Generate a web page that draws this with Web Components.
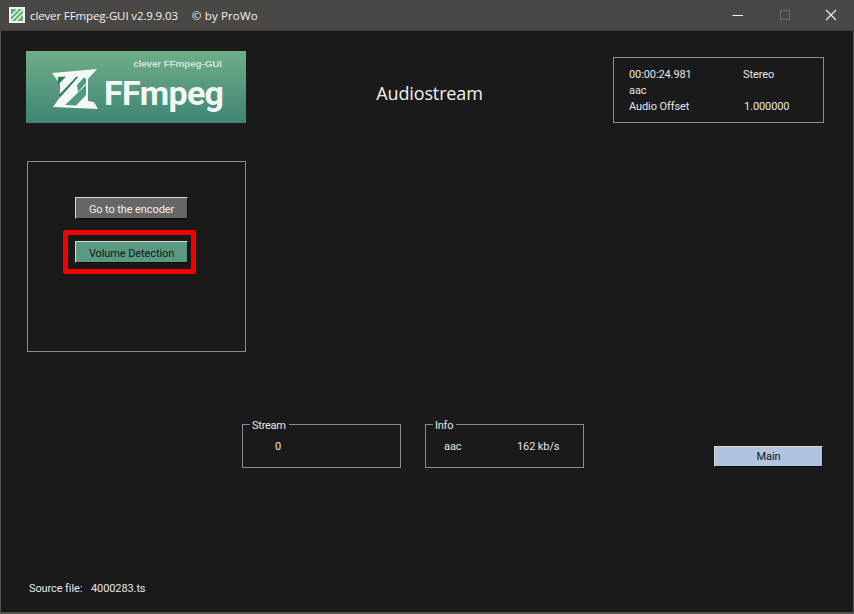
<!DOCTYPE html>
<html><head><meta charset="utf-8"><title>clever FFmpeg-GUI</title>
<style>
html,body{margin:0;padding:0;background:#1a1a1a}
body{width:854px;height:614px;overflow:hidden;font-family:"Open Sans","Noto Sans",sans-serif}
</style></head><body>
<app-window>
  <title-bar slot="title">clever FFmpeg-GUI v2.9.9.03<span style="margin-left:14px;letter-spacing:.15px">© by ProWo</span></title-bar>
  <div slot="top-left"><ff-logo></ff-logo></div>
  <span slot="heading">Audiostream</span>
  <info-box slot="top-right"></info-box>
  <action-panel slot="panel">
    <win-button tone="gray" style="margin:0 0 16px 47px">Go to the encoder</win-button>
    <red-mark><win-button tone="green">Volume Detection</win-button></red-mark>
  </action-panel>
  <group-box slot="stream" label="Stream" style="width:159px;margin-right:24px"><span style="margin-left:32px">0</span></group-box>
  <group-box slot="stream" label="Info" style="width:159px"><span style="margin-left:18px;width:73px;display:inline-block">aac</span><span>162 kb/s</span></group-box>
  <win-button slot="main" tone="blue" style="width:109px;height:21px;--lh:20px">Main</win-button>
  <span slot="source"><span style="display:inline-block;width:62px">Source file:</span>4000283.ts</span>
</app-window>
<script>
function def(name,html){
  customElements.define(name,class extends HTMLElement{
    connectedCallback(){
      if(this.shadowRoot)return;
      const r=this.attachShadow({mode:'open'});
      r.innerHTML=typeof html==='function'?html(this):html;
    }
  });
}
const font='font-family:Roboto,"Open Sans",sans-serif;font-size:11px;letter-spacing:-.1px;';
def('app-window',`<style>
:host{display:flex;flex-direction:column;width:854px;height:614px;box-sizing:border-box;border:1px solid #54524f;border-top:0;border-bottom-width:2px;background:#1a1a1a;color:#e6e6e6;${font}}
.top{display:flex;align-items:flex-start;margin:20px 0 0 25px;height:72px}
.tl{width:220px;flex:none}
.head{width:367px;flex:none;text-align:center;font:18px/24px "Open Sans",sans-serif;color:#f0f0f0;padding-top:30px;letter-spacing:-.13px}
.tr{flex:none;margin-top:6px}
.panel{margin:38px 0 0 26px}
.mid{display:flex;align-items:flex-start;margin:65px 0 0 241px;height:51px}
.main{margin:29px 0 0 130px}
.src{margin:113px 0 0 28px;line-height:16px}
</style>
<slot name="title"></slot>
<div class="top"><div class="tl"><slot name="top-left"></slot></div><div class="head"><slot name="heading"></slot></div><div class="tr"><slot name="top-right"></slot></div></div>
<div class="panel"><slot name="panel"></slot></div>
<div class="mid"><slot name="stream"></slot><div class="main"><slot name="main"></slot></div></div>
<div class="src"><slot name="source"></slot></div>`);
def('title-bar',`<style>
:host{display:flex;align-items:center;height:30px;margin:0 -1px;padding-left:9px;background:#4a4845;color:#f2f2f2;font:11.5px "Open Sans",sans-serif;flex:none;border-bottom:1px solid #3d3b39;box-sizing:content-box}
svg{display:block}
.ico{width:16px;height:16px;margin-right:5px;flex:none}
.txt{flex:1;white-space:pre;letter-spacing:-.13px}
.ctl{display:flex;height:30px}
.b{width:46px;display:flex;align-items:center;justify-content:center}
</style>
<svg class="ico" viewBox="0 0 16 16"><rect width="16" height="16" fill="#f4f4f2"/><rect x="2" y="2" width="12" height="12" fill="#5fae72"/><path d="M2 9 9 2M2 14 14 2M7 14 14 7" stroke="#e8f3e6" stroke-width="1.6" fill="none"/></svg>
<span class="txt"><slot></slot></span>
<div class="ctl">
<div class="b"><svg width="12" height="12" viewBox="0 0 12 12" style="margin-left:-2px"><path d="M0.5 6.5h10.5" stroke="#f2f2f2" stroke-width="1"/></svg></div>
<div class="b"><svg width="12" height="12" viewBox="0 0 12 12"><rect x="1.5" y="1.5" width="9" height="9" fill="none" stroke="#6c6b69"/></svg></div>
<div class="b"><svg width="12" height="12" viewBox="0 0 12 12"><path d="M1 1 11 11M11 1 1 11" stroke="#f2f2f2" stroke-width="1.1" fill="none"/></svg></div>
</div>`);
def('ff-logo',`<style>
:host{display:block;width:220px;height:72px;background:linear-gradient(#6fae88,#3f8476);position:relative;overflow:hidden;color:#f4f8f5}
.s{position:absolute;right:24px;top:6px;font:bold 9.9px/13px "Liberation Sans",sans-serif;color:#cfe5d6;white-space:nowrap}
.f{position:absolute;left:78px;top:22px;font:bold 34px/40px Roboto,sans-serif;letter-spacing:-.75px;white-space:nowrap}
svg{position:absolute;left:22px;top:13px}
</style>
<span class="s">clever FFmpeg-GUI</span>
<svg width="54" height="50" viewBox="0 0 54 50"><path fill="#f4f8f5" d="M4 9 49 5 40 15V37L46 38 50 45 5 43 12 33V20Z"/>
<path fill="#35775f" d="M10 13 18 12.400 10 21ZM11 31 28 13 30.500 12.800 12 33.500Z"/><path fill="#4d9a7e" d="M29 21 36 13.500 38 15 38 19 30 28ZM17 41 38 21 38 31 28 41.500Z"/></svg>
<span class="f">FFmpeg</span>`);
def('info-box',`<style>
:host{display:block;width:211px;height:66px;box-sizing:border-box;border:1px solid #8c8c8c;padding:9px 0 0 15px;line-height:16px;color:#e6e6e6}
.r{display:flex;white-space:nowrap}.a{width:114px}
</style>
<div class="r"><span class="a">00:00:24.981</span><span>Stereo</span></div>
<div class="r"><span class="a">aac</span></div>
<div class="r"><span class="a" style="width:115px">Audio Offset</span><span>1.000000</span></div>`);
def('action-panel',`<style>
:host{display:flex;flex-direction:column;align-items:flex-start;width:219px;height:191px;box-sizing:border-box;border:1px solid #8c8c8c;padding-top:35px}
</style><slot></slot>`);
def('red-mark',`<style>
:host{display:block;border:5px solid #f40000;border-radius:2px;padding:6px 3px 6px 7px;margin:-5px 0 0 35px}
</style><slot></slot>`);
def('win-button',h=>{
  const t=h.getAttribute('tone');
  const c={gray:['#666666','#efefef','#0a0a0a'],green:['#5a9a82','#0d2218','#0a0a0a'],blue:['#b0c4de','#101828','#060a20']}[t];
  return `<style>
:host{display:block;width:113px;height:22px;box-sizing:border-box;background:${c[0]};color:${c[1]};border:1px solid;border-color:#d8d8d8 ${c[2]} ${c[2]} #d8d8d8;text-align:center;line-height:var(--lh,24px);white-space:nowrap}
</style><slot></slot>`});
def('group-box',h=>`<style>
:host{display:block;height:51px;color:#e6e6e6}
fieldset{margin:0;height:100%;box-sizing:border-box;border:1px solid #8c8c8c;padding:0;display:block}
legend{margin-left:7px;padding:0 3px 0 2px;line-height:18px;height:14px;letter-spacing:-.25px}
div{padding-top:8px;line-height:16px;white-space:nowrap}
</style><fieldset><legend>${h.getAttribute('label')}</legend><div><slot></slot></div></fieldset>`);
</script>
</body></html>
